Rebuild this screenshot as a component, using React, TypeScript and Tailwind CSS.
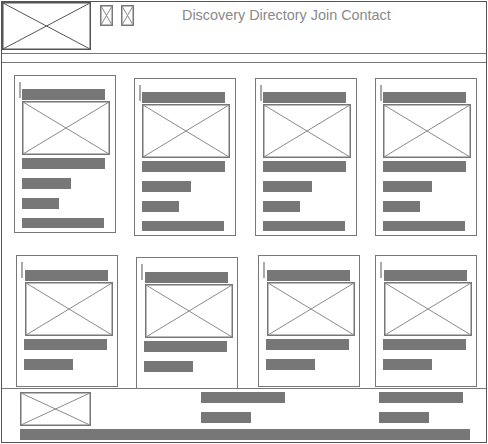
const BAR = 'bg-[#777777]';

function Placeholder({ w, h, stroke = '#8a8a8a', border = '#777777' }: { w: number; h: number; stroke?: string; border?: string }) {
  return (
    <svg width={w} height={h} className="block shrink-0">
      <rect x={0.75} y={0.75} width={w - 1.5} height={h - 1.5} fill="white" stroke={border} strokeWidth={1.5} />
      <line x1={1} y1={1} x2={w - 1} y2={h - 1} stroke={stroke} strokeWidth={1} />
      <line x1={w - 1} y1={1} x2={1} y2={h - 1} stroke={stroke} strokeWidth={1} />
    </svg>
  );
}

type Card = { pos: string; tall: boolean; titleGap: string; titleTop: string; indent: string };

const rowOne: Card[] = [
  { pos: 'ml-[12px] mt-[12px]', tall: true, titleGap: 'ml-[1px]', titleTop: 'mt-[7px]', indent: 'ml-[3px]' },
  { pos: 'ml-[18px] mt-[15px]', tall: true, titleGap: 'ml-[1px]', titleTop: 'mt-[7px]', indent: 'ml-[3px]' },
  { pos: 'ml-[19px] mt-[15px]', tall: true, titleGap: 'ml-[1px]', titleTop: 'mt-[7px]', indent: 'ml-[3px]' },
  { pos: 'ml-[18px] mt-[15px]', tall: true, titleGap: 'ml-[1px]', titleTop: 'mt-[7px]', indent: 'ml-[3px]' },
];

const rowTwo: Card[] = [
  { pos: 'ml-[14px] mt-[19px]', tall: false, titleGap: 'ml-[2px]', titleTop: 'mt-[8px]', indent: 'ml-[4px]' },
  { pos: 'ml-[18px] mt-[21px]', tall: false, titleGap: 'ml-[2px]', titleTop: 'mt-[8px]', indent: 'ml-[4px]' },
  { pos: 'ml-[20px] mt-[19px]', tall: false, titleGap: 'ml-[2px]', titleTop: 'mt-[8px]', indent: 'ml-[4px]' },
  { pos: 'ml-[15px] mt-[19px]', tall: false, titleGap: 'ml-[2px]', titleTop: 'mt-[8px]', indent: 'ml-[4px]' },
];

function ProductCard({ card }: { card: Card }) {
  return (
    <div
      className={`${card.pos} ${card.tall ? 'h-[158px]' : 'h-[132px]'} w-[102px] shrink-0 border border-[#777777] bg-white flex flex-col pt-[6px] pl-[4px]`}
    >
      <div className="flex items-start">
        <div className="w-[2px] h-[16px] bg-[#aaaaaa]" />
        <div className={`${card.titleGap} ${card.titleTop} w-[83px] h-[11px] ${BAR}`} />
      </div>
      <div className={`mt-[1px] ${card.indent}`}>
        <Placeholder w={88} h={54} />
      </div>
      <div className={`mt-[3px] ml-[3px] w-[83px] h-[11px] ${BAR}`} />
      <div className={`mt-[9px] ml-[3px] w-[49px] h-[11px] ${BAR}`} />
      {card.tall && (
        <>
          <div className={`mt-[9px] ml-[3px] w-[37px] h-[11px] ${BAR}`} />
          <div className={`mt-[9px] ml-[3px] w-[82px] h-[10px] ${BAR}`} />
        </>
      )}
    </div>
  );
}

export default function App() {
  return (
    <div className="m-[1px] w-[486px] h-[442px] border border-[#555555] bg-white flex flex-col overflow-hidden">
      {/* header */}
      <div className="h-[52px] flex items-start border-b border-[#777777]">
        <Placeholder w={89} h={48} stroke="#555555" border="#555555" />
        <div className="ml-[9px] mt-[3px]">
          <Placeholder w={13} h={21} />
        </div>
        <div className="ml-[8px] mt-[3px]">
          <Placeholder w={13} h={21} />
        </div>
        <div
          className="ml-[48px] mt-[5px] text-[14.4px] leading-[16px] text-[#8a8a8a] whitespace-nowrap"
          style={{ fontFamily: '"Liberation Sans", Arial, sans-serif' }}
        >
          Discovery Directory Join Contact
        </div>
      </div>
      <div className="h-[9px] border-b border-[#777777] shrink-0" />

      {/* products */}
      <div className="h-[325px] shrink-0 overflow-hidden flex flex-col">
        <div className="flex items-start">
          {rowOne.map((c, i) => (
            <ProductCard key={i} card={c} />
          ))}
        </div>
        <div className="flex items-start">
          {rowTwo.map((c, i) => (
            <ProductCard key={i} card={c} />
          ))}
        </div>
      </div>

      {/* footer */}
      <div className="h-[53px] shrink-0 border-t border-[#777777] pl-[18px] pt-[3px] flex flex-col">
        <div className="flex items-start">
          <Placeholder w={71} h={34} />
          <div className="ml-[110px] flex flex-col gap-[9px]">
            <div className={`w-[84px] h-[11px] ${BAR}`} />
            <div className={`w-[50px] h-[11px] ${BAR}`} />
          </div>
          <div className="ml-[94px] flex flex-col gap-[9px]">
            <div className={`w-[84px] h-[11px] ${BAR}`} />
            <div className={`w-[50px] h-[11px] ${BAR}`} />
          </div>
        </div>
        <div className={`mt-[3px] w-[450px] h-[11px] ${BAR}`} />
      </div>
    </div>
  );
}
